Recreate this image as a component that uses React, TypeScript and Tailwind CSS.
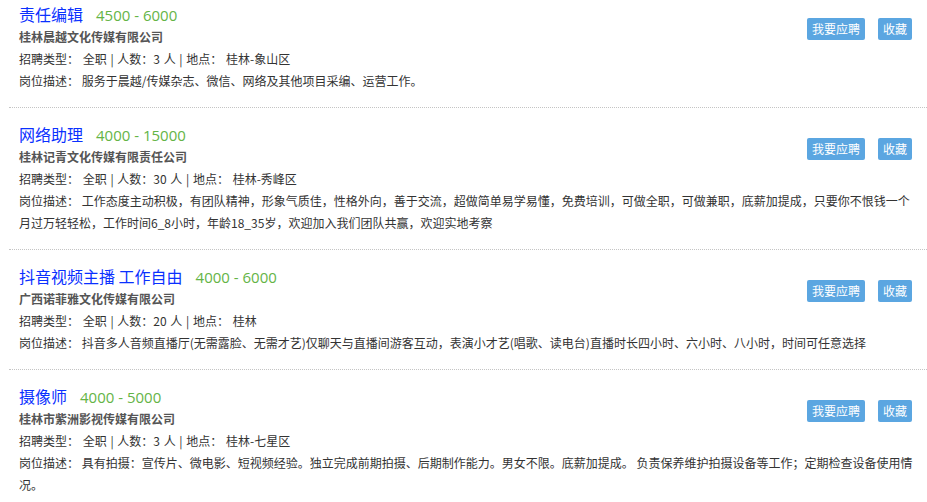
const jobs = [
  {
    title: "责任编辑",
    salary: "4500 - 6000",
    company: "桂林晨越文化传媒有限公司",
    count: "3",
    place: "桂林-象山区",
    desc: "服务于晨越/传媒杂志、微信、网络及其他项目采编、运营工作。",
  },
  {
    title: "网络助理",
    salary: "4000 - 15000",
    company: "桂林记青文化传媒有限责任公司",
    count: "30",
    place: "桂林-秀峰区",
    desc: "工作态度主动积极，有团队精神，形象气质佳，性格外向，善于交流，超做简单易学易懂，免费培训，可做全职，可做兼职，底薪加提成，只要你不恨钱一个月过万轻轻松，工作时间6_8小时，年龄18_35岁，欢迎加入我们团队共赢，欢迎实地考察",
  },
  {
    title: "抖音视频主播 工作自由",
    salary: "4000 - 6000",
    company: "广西诺菲雅文化传媒有限公司",
    count: "20",
    place: "桂林",
    desc: "抖音多人音频直播厅(无需露脸、无需才艺)仅聊天与直播间游客互动，表演小才艺(唱歌、读电台)直播时长四小时、六小时、八小时，时间可任意选择",
  },
  {
    title: "摄像师",
    salary: "4000 - 5000",
    company: "桂林市紫洲影视传媒有限公司",
    count: "3",
    place: "桂林-七星区",
    desc: "具有拍摄：宣传片、微电影、短视频经验。独立完成前期拍摄、后期制作能力。男女不限。底薪加提成。 负责保养维护拍摄设备等工作；定期检查设备使用情况。",
  },
];

export default function App() {
  return (
    <div className="w-[927px] h-[502px] overflow-hidden bg-white text-[12px] text-[#333] font-['Noto_Sans_CJK_SC',sans-serif]">
      <ul className="-mt-[12px]">
        {jobs.map((job) => (
          <li
            key={job.title}
            className="ml-[9px] border-b border-dotted border-[#c4c4c4] pl-[10px] pr-[12px] pt-[14px] pb-[15px]"
          >
            {/* 按钮 */}
            <div className="float-right mt-[16px] mr-[3px] flex gap-[13px]">
              <button className="h-[22px] rounded-[2px] bg-[#5ba6e1] px-[5px] text-[12px] leading-[22px] text-white">
                我要应聘
              </button>
              <button className="h-[22px] rounded-[2px] bg-[#5ba6e1] px-[5px] text-[12px] leading-[22px] text-white">
                收藏
              </button>
            </div>

            <div className="flex h-[24px] items-baseline leading-[24px]">
              <span className="text-[16px] text-[#0a30ff]">{job.title}</span>
              <span className="ml-[13px] font-['Open_Sans',sans-serif] text-[15px] text-[#64b446]">
                {job.salary}
              </span>
            </div>
            <div className="font-bold leading-[22px] text-[#555]">{job.company}</div>
            <div className="leading-[22px] [word-spacing:1px]">
              招聘类型： 全职 | 人数：{job.count} 人 | 地点： {job.place}
            </div>
            <div className="leading-[22px]">岗位描述： {job.desc}</div>
          </li>
        ))}
      </ul>
    </div>
  );
}
